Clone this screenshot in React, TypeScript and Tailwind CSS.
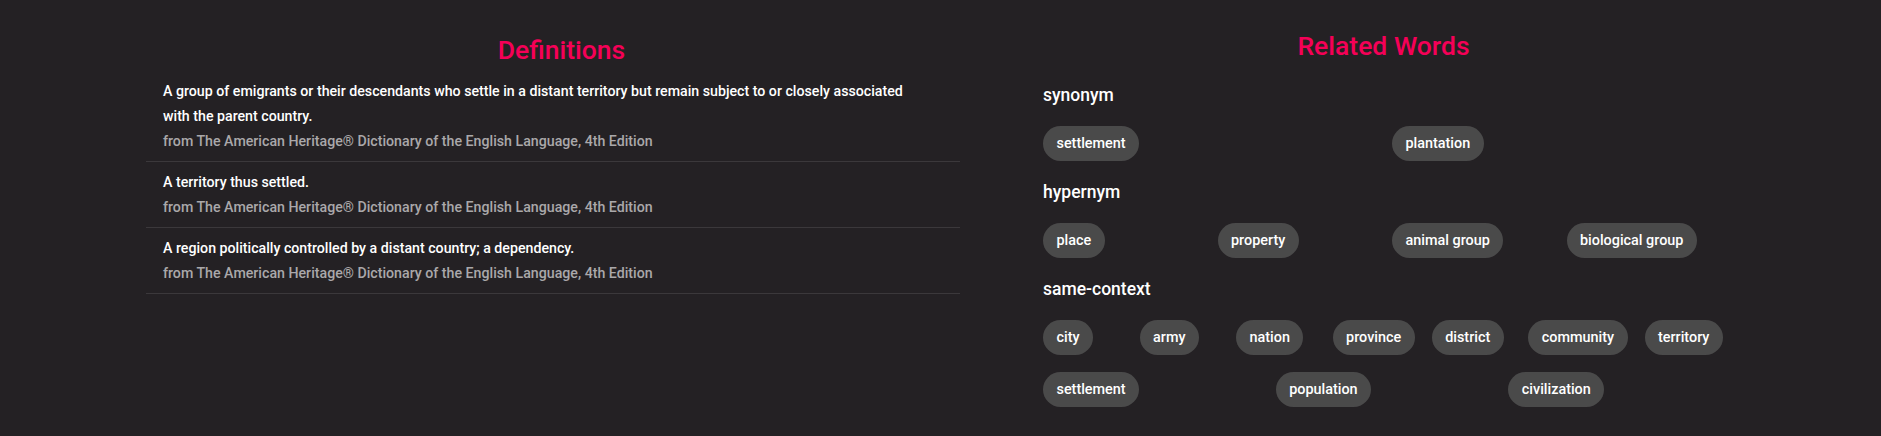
import React from "react";

const definitions = [
  "A group of emigrants or their descendants who settle in a distant territory but remain subject to or closely associated with the parent country.",
  "A territory thus settled.",
  "A region politically controlled by a distant country; a dependency.",
];

const related: { label: string; words: string[] }[] = [
  { label: "synonym", words: ["settlement", "plantation"] },
  { label: "hypernym", words: ["place", "property", "animal group", "biological group"] },
  {
    label: "same-context",
    words: [
      "city",
      "army",
      "nation",
      "province",
      "district",
      "community",
      "territory",
      "settlement",
      "population",
      "civilization",
    ],
  },
];

const SOURCE = "from The American Heritage\u00ae Dictionary of the English Language, 4th Edition";

export default function App() {
  return (
    <div
      className="h-[436px] w-full overflow-hidden bg-[#242124] pt-[30px] pl-[146px] pr-[140px]"
      style={{ fontFamily: "Roboto, 'Noto Sans', sans-serif" }}
    >
      <div className="flex items-start">
        {/* Definitions */}
        <div className="w-[814px] shrink-0 pt-[4px]">
          <h2 className="pl-[17px] text-center text-[26.5px] leading-[32px] font-medium text-[#f50057] mb-[5px]">
            Definitions
          </h2>
          <ul>
            {definitions.map((d, i) => (
              <li key={i} className="border-b border-[#3b383b] pl-[17px] pr-[40px] py-[8px]">
                <p className="text-[14.2px] leading-[25px] font-medium text-white">{d}</p>
                <p className="text-[14.2px] leading-[24px] font-medium text-[#aaa8aa]">{SOURCE}</p>
              </li>
            ))}
          </ul>
        </div>

        {/* Related words */}
        <div className="ml-[66px] w-[715px] shrink-0">
          <h2 className="text-center text-[26.5px] leading-[32px] font-medium text-[#f50057] mb-[23px]">
            Related Words
          </h2>
          <div className="pl-[17px]">
            {related.map((group, gi) => (
              <div key={group.label} className={gi === 0 ? "" : "mt-[4px]"}>
                <h3 className="text-[17.5px] leading-[21px] font-medium text-white mb-[20px]">
                  {group.label}
                </h3>
                <div className="flex flex-wrap">
                  {group.words.map((w, wi) => (
                    <div key={wi} className="flex-1 pr-[17px] pb-[17px]">
                      <span className="inline-flex h-[35px] items-center whitespace-nowrap rounded-full bg-[#4a4a4a] px-[13.5px] text-[14.4px] font-medium text-white">
                        {w}
                      </span>
                    </div>
                  ))}
                </div>
              </div>
            ))}
          </div>
        </div>
      </div>
    </div>
  );
}
